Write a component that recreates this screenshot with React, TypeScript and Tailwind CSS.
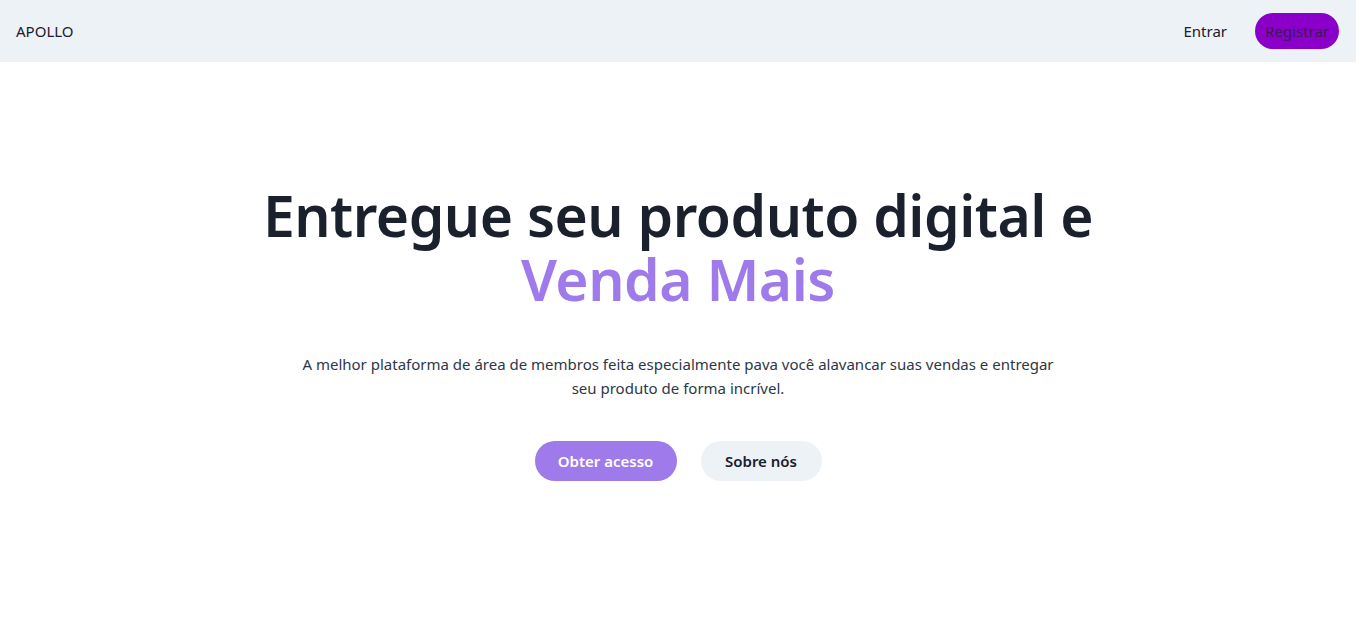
export default function App() {
  return (
    <div className="min-h-screen bg-white font-['Noto_Sans','Open_Sans',sans-serif] text-[#1a202c]">
      <header className="flex h-[62px] items-center justify-between bg-[#edf2f7] pl-4 pr-[17px]">
        <span className="text-[15px] text-[#1a202c]">APOLLO</span>
        <nav className="flex items-center gap-7">
          <a className="text-[15px] text-[#1a202c]">Entrar</a>
          <button className="h-9 w-[84px] rounded-full bg-[#8b00c9] text-[15px] text-[#3b1a5a]">
            Registrar
          </button>
        </nav>
      </header>

      <main className="flex flex-col items-center pt-[121px] text-center">
        <h1 className="text-[57px] font-semibold leading-[64px] tracking-[-0.5px] text-[#1a202c]">
          Entregue seu produto digital e
          <br />
          <span className="text-[#9f7aea]">Venda Mais</span>
        </h1>
        <p className="mt-[41px] max-w-[760px] text-[15px] leading-6 text-[#2d3748]">
          A melhor plataforma de área de membros feita especialmente pava você alavancar suas vendas e
          entregar seu produto de forma incrível.
        </p>
        <div className="mt-[41px] flex gap-6">
          <button className="h-10 w-[142px] rounded-full bg-[#9f7aea] text-[15px] font-semibold text-white">
            Obter acesso
          </button>
          <button className="h-10 w-[121px] rounded-full bg-[#edf2f7] text-[15px] font-semibold text-[#1a202c]">
            Sobre nós
          </button>
        </div>
      </main>
    </div>
  );
}
